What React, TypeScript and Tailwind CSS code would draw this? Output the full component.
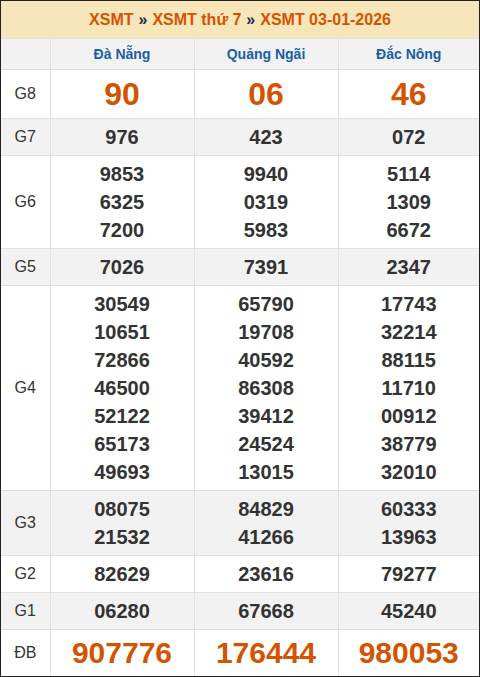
const provinces = ['Đà Nẵng', 'Quảng Ngãi', 'Đắc Nông'];

type Row = { label: string; values: string[][]; big?: 'g8' | 'db'; shade?: boolean; h: string };

const rows: Row[] = [
  { label: 'G8', values: [['90'], ['06'], ['46']], big: 'g8', h: 'h-[49px]' },
  { label: 'G7', values: [['976'], ['423'], ['072']], shade: true, h: 'h-[37px]' },
  {
    label: 'G6',
    values: [
      ['9853', '6325', '7200'],
      ['9940', '0319', '5983'],
      ['5114', '1309', '6672'],
    ],
    h: 'h-[93px]',
  },
  { label: 'G5', values: [['7026'], ['7391'], ['2347']], shade: true, h: 'h-[37px]' },
  {
    label: 'G4',
    values: [
      ['30549', '10651', '72866', '46500', '52122', '65173', '49693'],
      ['65790', '19708', '40592', '86308', '39412', '24524', '13015'],
      ['17743', '32214', '88115', '11710', '00912', '38779', '32010'],
    ],
    h: 'h-[205px]',
  },
  {
    label: 'G3',
    values: [
      ['08075', '21532'],
      ['84829', '41266'],
      ['60333', '13963'],
    ],
    shade: true,
    h: 'h-[65px]',
  },
  { label: 'G2', values: [['82629'], ['23616'], ['79277']], h: 'h-[37px]' },
  { label: 'G1', values: [['06280'], ['67668'], ['45240']], shade: true, h: 'h-[37px]' },
  { label: 'ĐB', values: [['907776'], ['176444'], ['980053']], big: 'db', h: 'h-[47px]' },
];

export default function App() {
  return (
    <div className="w-[480px] h-[677px] border border-[#222] bg-white overflow-hidden font-['Liberation_Sans',Arial,sans-serif]">
      <div className="h-[37px] bg-[#f7e6b9] flex items-center justify-center text-[16px] font-bold text-[#d35400]">
        <span>XSMT</span>
        <span className="mx-[5px] text-[#1c2a4a]">»</span>
        <span>XSMT thứ 7</span>
        <span className="mx-[5px] text-[#1c2a4a]">»</span>
        <span>XSMT 03-01-2026</span>
      </div>
      <table className="w-[478px] table-fixed border-collapse">
        <colgroup>
          <col className="w-[49px]" />
          <col className="w-[144px]" />
          <col className="w-[144px]" />
          <col className="w-[141px]" />
        </colgroup>
        <thead>
          <tr className="bg-[#f2f2f2]">
            <th className="h-[31px] p-0 border border-[#e0e0e0] border-l-0" />
            {provinces.map((p) => (
              <th key={p} className="h-[31px] p-0 border border-[#e0e0e0] last:border-r-0 text-[14px] font-bold text-[#1a5ea6]">
                {p}
              </th>
            ))}
          </tr>
        </thead>
        <tbody>
          {rows.map((r) => (
            <tr key={r.label} className={r.shade ? 'bg-[#f2f2f2]' : 'bg-white'}>
              <td className={`${r.h} p-0 border border-[#e0e0e0] border-l-0 text-center text-[16px] text-[#333]`}>
                {r.label}
              </td>
              {r.values.map((col, i) => (
                <td key={i} className="p-0 border border-[#e0e0e0] last:border-r-0 text-center align-middle">
                  {r.big === 'g8' && (
                    <div className="text-[32px] leading-[40px] font-bold text-[#d35400]">{col[0]}</div>
                  )}
                  {r.big === 'db' && (
                    <div className="text-[30px] leading-[38px] font-bold text-[#d35400]">{col[0]}</div>
                  )}
                  {!r.big &&
                    col.map((v, j) => (
                      <div key={j} className="text-[20px] leading-[28px] font-bold text-[#333]">
                        {v}
                      </div>
                    ))}
                </td>
              ))}
            </tr>
          ))}
        </tbody>
      </table>
    </div>
  );
}
